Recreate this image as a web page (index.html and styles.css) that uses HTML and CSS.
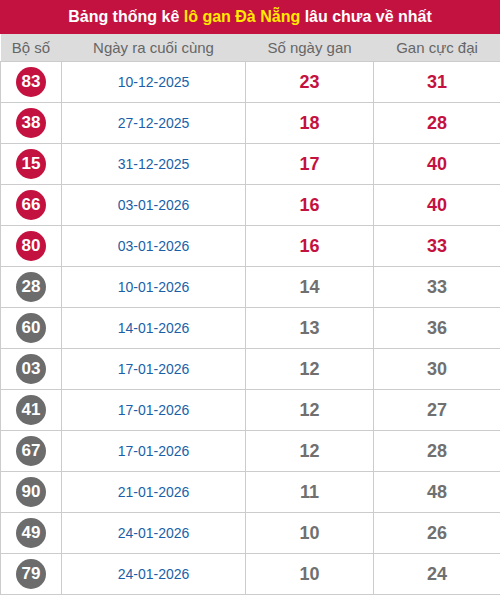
FILE: index.html
```html
<!DOCTYPE html>
<html lang="vi">
<head>
<meta charset="utf-8">
<link rel="stylesheet" href="styles.css">
</head>
<body>
<div class="box">
  <div class="title">Bảng thống kê <span class="hl">lô gan Đà Nẵng</span> lâu chưa về nhất</div>
  <table class="tbl">
    <colgroup><col class="c1"><col class="c2"><col class="c3"><col class="c4"></colgroup>
    <thead>
      <tr><th>Bộ số</th><th>Ngày ra cuối cùng</th><th>Số ngày gan</th><th>Gan cực đại</th></tr>
    </thead>
    <tbody>
      <tr class="hot"><td><span class="ball">83</span></td><td class="date">10-12-2025</td><td class="num">23</td><td class="num">31</td></tr>
      <tr class="hot"><td><span class="ball">38</span></td><td class="date">27-12-2025</td><td class="num">18</td><td class="num">28</td></tr>
      <tr class="hot"><td><span class="ball">15</span></td><td class="date">31-12-2025</td><td class="num">17</td><td class="num">40</td></tr>
      <tr class="hot"><td><span class="ball">66</span></td><td class="date">03-01-2026</td><td class="num">16</td><td class="num">40</td></tr>
      <tr class="hot"><td><span class="ball">80</span></td><td class="date">03-01-2026</td><td class="num">16</td><td class="num">33</td></tr>
      <tr><td><span class="ball">28</span></td><td class="date">10-01-2026</td><td class="num">14</td><td class="num">33</td></tr>
      <tr><td><span class="ball">60</span></td><td class="date">14-01-2026</td><td class="num">13</td><td class="num">36</td></tr>
      <tr><td><span class="ball">03</span></td><td class="date">17-01-2026</td><td class="num">12</td><td class="num">30</td></tr>
      <tr><td><span class="ball">41</span></td><td class="date">17-01-2026</td><td class="num">12</td><td class="num">27</td></tr>
      <tr><td><span class="ball">67</span></td><td class="date">17-01-2026</td><td class="num">12</td><td class="num">28</td></tr>
      <tr><td><span class="ball">90</span></td><td class="date">21-01-2026</td><td class="num">11</td><td class="num">48</td></tr>
      <tr><td><span class="ball">49</span></td><td class="date">24-01-2026</td><td class="num">10</td><td class="num">26</td></tr>
      <tr><td><span class="ball">79</span></td><td class="date">24-01-2026</td><td class="num">10</td><td class="num">24</td></tr>
    </tbody>
  </table>
</div>
</body>
</html>
```

FILE: styles.css
```css
html, body {
  margin: 0;
  padding: 0;
  background: #fff;
}
body {
  font-family: "Liberation Sans", Arial, sans-serif;
}
.box {
  width: 500px;
}
.title {
  height: 34px;
  background: #c41240;
  color: #fff;
  font-weight: bold;
  font-size: 16px;
  line-height: 34px;
  text-align: center;
}
.hl {
  color: #ffea00;
}
.tbl {
  width: 500px;
  border-collapse: collapse;
  table-layout: fixed;
}
.c1 { width: 61px; }
.c2 { width: 184px; }
.c3 { width: 128px; }
.c4 { width: 127px; }
.tbl th {
  background: #dcdcdc;
  color: #666;
  font-weight: normal;
  font-size: 15px;
  height: 27px;
  padding: 0;
  border-bottom: 1px solid #ccc;
  text-align: center;
}
.tbl td {
  height: 40px;
  padding: 0;
  border: 1px solid #ccc;
  text-align: center;
  vertical-align: middle;
}
.tbl tbody tr:first-child td {
  border-top: none;
}
.ball {
  display: inline-flex;
  align-items: center;
  justify-content: center;
  width: 30px;
  height: 30px;
  border-radius: 50%;
  background: #6c6c6c;
  color: #fff;
  font-weight: bold;
  font-size: 17px;
  vertical-align: middle;
}
.hot .ball {
  background: #c41240;
}
.date {
  color: #1a5fa8;
  font-size: 14px;
}
.num {
  color: #707070;
  font-weight: bold;
  font-size: 18px;
}
.hot .num {
  color: #c41240;
}
```
